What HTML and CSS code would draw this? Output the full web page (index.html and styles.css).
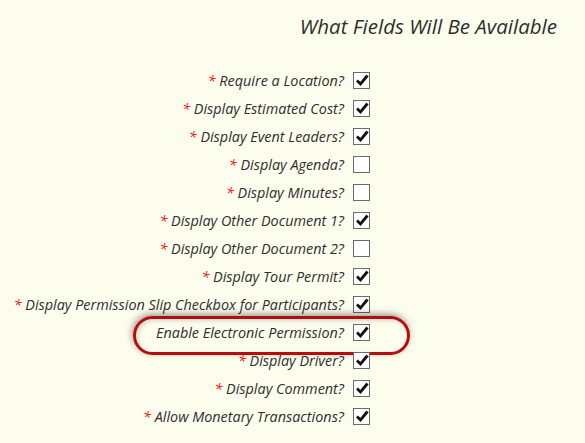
FILE: index.html
```html
<!DOCTYPE html>
<html lang="en">
  <head>
    <meta charset="UTF-8" />
    <title>What Fields Will Be Available</title>
    <link rel="stylesheet" href="styles.css">
  </head>
  <body>
    <h2 class="title">What Fields Will Be Available</h2>

    <div class="fields">
      <div class="row"><label><span class="req">*</span> Require a Location?</label><span class="box on"></span></div>
      <div class="row"><label><span class="req">*</span> Display Estimated Cost?</label><span class="box on"></span></div>
      <div class="row"><label><span class="req">*</span> Display Event Leaders?</label><span class="box on"></span></div>
      <div class="row"><label><span class="req">*</span> Display Agenda?</label><span class="box"></span></div>
      <div class="row"><label><span class="req">*</span> Display Minutes?</label><span class="box"></span></div>
      <div class="row"><label><span class="req">*</span> Display Other Document 1?</label><span class="box on"></span></div>
      <div class="row"><label><span class="req">*</span> Display Other Document 2?</label><span class="box"></span></div>
      <div class="row"><label><span class="req">*</span> Display Tour Permit?</label><span class="box on"></span></div>
      <div class="row"><label><span class="req">*</span> Display Permission Slip Checkbox for Participants?</label><span class="box on"></span></div>
      <div class="row circled"><label>Enable Electronic Permission?</label><span class="box on"></span></div>
      <div class="row"><label><span class="req">*</span> Display Driver?</label><span class="box on"></span></div>
      <div class="row"><label><span class="req">*</span> Display Comment?</label><span class="box on"></span></div>
      <div class="row"><label><span class="req">*</span> Allow Monetary Transactions?</label><span class="box on"></span></div>
    </div>

    <script>
      // draw the tick into every checked box
      var tick = '<svg width="14" height="14" viewBox="0 0 14 14"><path d="M2 7.5 L5.5 11 L12.5 2.5" fill="none" stroke="#111" stroke-width="2.8" stroke-linejoin="miter" stroke-linecap="butt"/></svg>';
      document.querySelectorAll(".box.on").forEach(function (b) {
        b.innerHTML = tick;
      });
    </script>
  </body>
</html>
```

FILE: styles.css
```css
body {
  margin: 0;
  padding: 0 8px;
  background-color: #fdfdee;
  color: #2e2e2e;
  font-family: "Open Sans", "DejaVu Sans", sans-serif;
  font-style: italic;
}
.title {
  margin: 0;
  padding: 12px 20px 0 0;
  height: 53px;
  box-sizing: border-box;
  text-align: right;
  font-size: 20.5px;
  font-weight: normal;
  line-height: 28px;
}
.fields {
  display: flex;
  flex-direction: column;
  padding-top: 13px;
}
.row {
  display: grid;
  grid-template-columns: 336px 17px;
  column-gap: 9px;
  align-items: center;
  height: 28px;
  position: relative;
}
.row label {
  text-align: right;
  font-size: 14.4px;
  white-space: nowrap;
}
.req {
  color: #f01010;
}
.box {
  width: 15px;
  height: 15px;
  border: 1px solid #6a6a6a;
  background-color: #fff;
  display: flex;
  align-items: center;
  justify-content: center;
}
.circled::before {
  content: "";
  position: absolute;
  left: 125px;
  top: -2px;
  width: 271px;
  height: 33px;
  border: 3px solid #b50d0d;
  border-radius: 20px;
  box-shadow: -1px -2px 7px rgba(0, 0, 0, 0.4), inset 2px 2px 4px rgba(0, 0, 0, 0.15);
}
```
